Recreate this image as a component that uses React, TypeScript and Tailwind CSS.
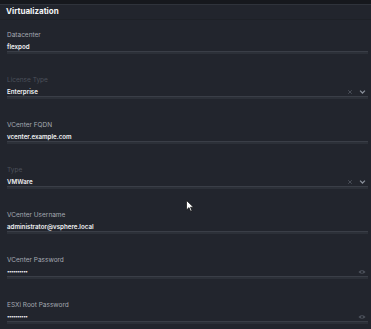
import React from "react";

type Field = {
  label: string;
  value: string;
  disabled?: boolean;
  kind?: "text" | "select" | "password";
};

const fields: Field[] = [
  { label: "Datacenter", value: "flexpod" },
  { label: "License Type", value: "Enterprise", disabled: true, kind: "select" },
  { label: "VCenter FQDN", value: "vcenter.example.com" },
  { label: "Type", value: "VMWare", disabled: true, kind: "select" },
  { label: "VCenter Username", value: "administrator@vsphere.local" },
  { label: "VCenter Password", value: "••••••••••", kind: "password" },
  { label: "ESXi Root Password", value: "••••••••••", kind: "password" },
];

function SelectIcons() {
  return (
    <div className="flex items-center gap-[6px] pr-[2px]">
      <svg width="6" height="6" viewBox="0 0 10 10" className="text-[#4a4f59]">
        <path d="M2 2 L8 8 M8 2 L2 8" stroke="currentColor" strokeWidth="1.6" fill="none" />
      </svg>
      <svg width="7" height="6" viewBox="0 0 10 8" className="text-[#8a909b]">
        <path d="M1.5 2 L5 5.5 L8.5 2" stroke="currentColor" strokeWidth="1.8" fill="none" />
      </svg>
    </div>
  );
}

function EyeIcon() {
  return (
    <svg width="8" height="6" viewBox="0 0 16 10" className="mr-[2px] text-[#4a4f59]">
      <path d="M1 5 C4 0.5 12 0.5 15 5 C12 9.5 4 9.5 1 5 Z" fill="currentColor" />
      <circle cx="8" cy="5" r="2" fill="#22252d" />
    </svg>
  );
}

export default function App() {
  return (
    <div
      className="relative w-[371px] h-[329px] overflow-hidden bg-[#22252d]"
      style={{ fontFamily: "Inter, 'Noto Sans', sans-serif" }}
    >
      <div className="h-[4px] bg-[#16181d]" />
      <div className="h-[12px] border-t border-[#2f333b] flex items-center pl-[6px]">
        <span className="text-[8px] font-bold text-[#f3f4f6] leading-none">Virtualization</span>
      </div>
      <div className="h-[1px] mt-[3px] bg-[#1e2127]" />
      <div className="flex flex-col pl-[7px] pr-[3px] pt-[11px]">
        {fields.map((f) => (
          <div key={f.label} className="flex flex-col mb-[24px]">
            <div
              className={`h-[9px] leading-[9px] text-[6.5px] ${
                f.disabled ? "text-[#4c515b]" : "text-[#a4a9b2]"
              }`}
            >
              {f.label}
            </div>
            <div className="mt-[2px] h-[10px] flex items-center justify-between border-b border-[#3a3e47] shadow-[0_2px_0_#2c3038]">
              <span
                className={`leading-[9px] font-semibold text-[#f1f2f4] ${
                  f.kind === "password" ? "text-[5px] tracking-[-0.5px]" : "text-[6.2px]"
                }`}
              >
                {f.value}
              </span>
              {f.kind === "select" && <SelectIcons />}
              {f.kind === "password" && <EyeIcon />}
            </div>
          </div>
        ))}
      </div>
      <svg
        className="absolute left-[186px] top-[200px]"
        width="8"
        height="12"
        viewBox="0 0 8 12"
      >
        <path d="M0.5 0.5 L0.5 10 L3 7.6 L4.6 11.3 L6 10.7 L4.5 7.2 L7.5 7.2 Z" fill="#ffffff" stroke="#111" strokeWidth="0.7" />
      </svg>
    </div>
  );
}
